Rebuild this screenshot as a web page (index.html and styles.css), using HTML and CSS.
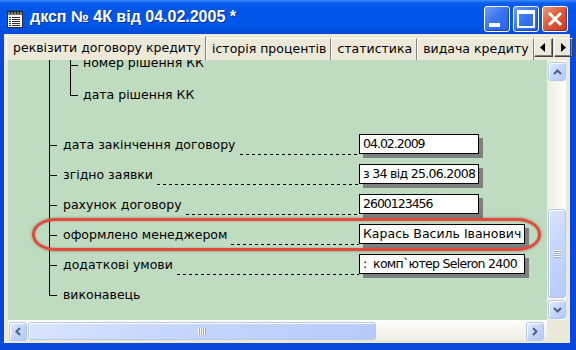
FILE: index.html
```html
<!DOCTYPE html>
<html lang="uk">
<head>
    <meta charset="UTF-8">
    <title>дксп № 4К від 04.02.2005</title>
    <link rel="stylesheet" href="styles.css">
</head>
<body>
    <div class="window">
        <div class="titlebar">
            <svg class="app-icon" width="18" height="19" viewBox="0 0 18 19">
                <rect x="1.5" y="2.5" width="15" height="16" fill="#f4f4f4" stroke="#2a2a2a"/>
                <rect x="2" y="3" width="14" height="3" fill="#7d7d7d"/>
                <rect x="4" y="1" width="1" height="4" fill="#222"/>
                <rect x="7" y="1" width="1" height="4" fill="#222"/>
                <rect x="10" y="1" width="1" height="4" fill="#222"/>
                <rect x="13" y="1" width="1" height="4" fill="#222"/>
                <path d="M3 8.5h2M6 8.5h8M3 10.5h2M6 10.5h8M3 12.5h2M6 12.5h8M3 14.5h2M6 14.5h8M3 16.5h2M6 16.5h8" stroke="#333" stroke-width="1"/>
            </svg>
            <span class="title">дксп № 4К від 04.02.2005 *</span>
            <div class="caption-buttons">
                <div class="cap-btn"><span class="min-glyph"></span></div>
                <div class="cap-btn"><span class="max-glyph"></span></div>
                <div class="cap-btn close">
                    <svg width="18" height="18" viewBox="0 0 18 18">
                        <path d="M3 3L15 15M15 3L3 15" stroke="#fff" stroke-width="3"/>
                    </svg>
                </div>
            </div>
        </div>

        <div class="client">
            <div class="tabs">
                <div class="tab active">реквізити договору кредиту</div>
                <div class="tab">історія процентів</div>
                <div class="tab">статистика</div>
                <div class="tab">видача кредиту</div>
                <div class="tab-arrows">
                    <div class="arrow-btn">
                        <svg width="6" height="9" viewBox="0 0 6 9"><path d="M5 0V9L0 4.5Z" fill="#000"/></svg>
                    </div>
                    <div class="arrow-btn">
                        <svg width="6" height="9" viewBox="0 0 6 9"><path d="M1 0V9L6 4.5Z" fill="#000"/></svg>
                    </div>
                </div>
            </div>

            <div class="page">
                <div class="view">
                    <div class="tree">
                        <div class="sub">
                            <div class="node"><span class="label">номер рішення КК</span></div>
                            <div class="node"><span class="label">дата рішення КК</span></div>
                        </div>
                        <div class="node">
                            <div class="lead"><span class="label">дата закінчення договору</span><span class="dots"></span></div>
                            <div class="value digits">04.02.2009</div>
                        </div>
                        <div class="node">
                            <div class="lead"><span class="label">згідно заявки</span><span class="dots"></span></div>
                            <div class="value mixed">з 34 від 25.06.2008</div>
                        </div>
                        <div class="node">
                            <div class="lead"><span class="label">рахунок договору</span><span class="dots"></span></div>
                            <div class="value digits">2600123456</div>
                        </div>
                        <div class="node">
                            <div class="lead"><span class="label">оформлено менеджером</span><span class="dots"></span></div>
                            <div class="value wide">Карась Василь Іванович</div>
                        </div>
                        <div class="node">
                            <div class="lead"><span class="label">додаткові умови</span><span class="dots"></span></div>
                            <div class="value wide mixed">:  комп`ютер Seleron 2400</div>
                        </div>
                        <div class="node"><span class="label">виконавець</span></div>
                    </div>
                    <div class="highlight"></div>
                </div>

                <div class="vscroll">
                    <div class="sb-btn">
                        <svg width="9" height="6" viewBox="0 0 9 6"><path d="M1 5L4.5 1.5L8 5" fill="none" stroke="#4d6185" stroke-width="2"/></svg>
                    </div>
                    <div class="vtrack">
                        <div class="thumb vthumb"><span class="grip"></span></div>
                    </div>
                    <div class="sb-btn">
                        <svg width="9" height="6" viewBox="0 0 9 6"><path d="M1 1L4.5 4.5L8 1" fill="none" stroke="#4d6185" stroke-width="2"/></svg>
                    </div>
                </div>

                <div class="hscroll">
                    <div class="sb-btn">
                        <svg width="6" height="9" viewBox="0 0 6 9"><path d="M5 1L1.5 4.5L5 8" fill="none" stroke="#4d6185" stroke-width="2"/></svg>
                    </div>
                    <div class="htrack">
                        <div class="thumb hthumb"><span class="grip"></span></div>
                    </div>
                    <div class="sb-btn">
                        <svg width="6" height="9" viewBox="0 0 6 9"><path d="M1 1L4.5 4.5L1 8" fill="none" stroke="#4d6185" stroke-width="2"/></svg>
                    </div>
                </div>

                <div class="corner"></div>
            </div>
        </div>
    </div>
</body>
</html>
```

FILE: styles.css
```css
* {
    margin: 0;
    padding: 0;
    box-sizing: border-box;
}

body {
    width: 576px;
    height: 350px;
    overflow: hidden;
    font-family: "DejaVu Sans", sans-serif;
    font-size: 12.5px;
    color: #000;
}

.window {
    height: 350px;
    display: flex;
    flex-direction: column;
    background: #0a48dc;
}

/* title bar */

.titlebar {
    height: 34px;
    padding: 4px 8px 0 6px;
    display: flex;
    align-items: center;
    gap: 6px;
    background: linear-gradient(to bottom, #3d8cff 0, #0b5df0 3px, #0055e6 10px, #0057ec 24px, #004bd8 34px);
}

.app-icon {
    flex: none;
    margin-top: -1px;
}

.title {
    flex: 1;
    font-family: "Liberation Sans", Arial, sans-serif;
    font-weight: bold;
    font-size: 16px;
    color: #fff;
    text-shadow: 1px 1px 0 #0a2f9a;
    margin-top: -4px;
}

.caption-buttons {
    display: flex;
    gap: 3px;
}

.cap-btn {
    width: 26px;
    height: 26px;
    border: 1px solid #fff;
    border-radius: 3px;
    background: linear-gradient(135deg, #6f9cf7 0%, #3b74ee 45%, #2a63e6 100%);
    box-shadow: inset -1px -1px 1px rgba(0, 30, 140, 0.5);
    position: relative;
    display: grid;
    place-items: center;
}

.cap-btn.close {
    background: linear-gradient(135deg, #eb9a80 0%, #de5a39 45%, #cc3a1b 100%);
}

.min-glyph {
    position: absolute;
    left: 4px;
    bottom: 4px;
    width: 11px;
    height: 4px;
    background: #fff;
}

.max-glyph {
    width: 18px;
    height: 18px;
    border: 2px solid #fff;
    border-top-width: 4px;
}

/* client area */

.client {
    flex: 1;
    margin: 0 6px 7px 4px;
    background: #ece9d8;
    display: flex;
    flex-direction: column;
}

.tabs {
    height: 26px;
    padding: 2px 0 0 2px;
    display: flex;
    align-items: flex-end;
}

.tab {
    height: 22px;
    padding: 0 4px 0 5px;
    line-height: 20px;
    border-top: 1px solid #fff;
    border-left: 1px solid #fff;
    border-right: 1px solid #808080;
    white-space: nowrap;
}

.tab.active {
    height: 24px;
    width: 200px;
    padding: 0 6px;
    line-height: 22px;
}

.tab-arrows {
    margin-left: auto;
    margin-bottom: 3px;
    display: flex;
    gap: 1px;
}

.arrow-btn {
    width: 19px;
    height: 19px;
    display: grid;
    place-items: center;
    border: 1px solid;
    border-color: #fff #404040 #404040 #fff;
    box-shadow: inset -1px -1px 0 #808080;
}

.page {
    flex: 1;
    margin: 0 4px 3px 4px;
    display: grid;
    grid-template-columns: 1fr 19px;
    grid-template-rows: 1fr 20px;
}

/* tree */

.view {
    position: relative;
    overflow: hidden;
    background: #c0dcc0;
}

.tree {
    position: relative;
    margin: -10px 0 0 41px;
}

.tree::before,
.sub::before {
    content: '';
    position: absolute;
    left: 0;
    top: 0;
    bottom: 15px;
    border-left: 1px solid #000;
}

.sub {
    position: relative;
    margin: 0 0 20px 21px;
}

.node {
    position: relative;
    height: 30px;
    padding-left: 14px;
    display: flex;
    align-items: flex-start;
}

.node::before {
    content: '';
    position: absolute;
    left: 0;
    top: 15px;
    width: 8px;
    border-top: 1px solid #000;
}

.sub .node {
    padding-left: 13px;
}

.sub .node:first-child .label {
    margin-top: -2px;
}

.label {
    line-height: 30px;
    white-space: nowrap;
}

.lead {
    width: 296px;
    display: flex;
}

.lead .label {
    padding-right: 4px;
}

.dots {
    flex: 1;
    height: 1px;
    margin-top: 24px;
    background: repeating-linear-gradient(to right, #000 0 3px, transparent 3px 6px);
}

.value {
    width: 120px;
    height: 20px;
    margin-top: 4px;
    padding: 0 3px;
    border: 1px solid #000;
    background: #fff;
    box-shadow: 4px 4px 0 #808080;
    line-height: 18px;
    white-space: pre;
    overflow: hidden;
}

.value.wide {
    width: 166px;
}

.value.digits {
    letter-spacing: -1px;
}

.value.mixed {
    letter-spacing: -0.7px;
}

.highlight {
    position: absolute;
    left: 24px;
    top: 158px;
    width: 509px;
    height: 33px;
    border: 3px solid #e5493b;
    border-radius: 24px / 16px;
    box-shadow: 0 0 3px rgba(70, 70, 60, 0.55), inset 0 0 2px rgba(70, 70, 60, 0.45);
}

/* scrollbars */

.vscroll {
    display: flex;
    flex-direction: column;
    padding: 2px 0 1px 1px;
    background: linear-gradient(to right, #eeede5, #fefefb);
}

.hscroll {
    display: flex;
    padding: 2px 3px 0 1px;
    background: linear-gradient(to bottom, #fefefb, #eeede5);
}

.sb-btn {
    flex: none;
    width: 18px;
    height: 19px;
    display: grid;
    place-items: center;
    border: 1px solid #b4c7f1;
    border-radius: 3px;
    background: linear-gradient(135deg, #e2eafe 0%, #c6d6fc 50%, #b4c9f8 100%);
    box-shadow: inset 1px 1px 0 #fff;
}

.vtrack {
    flex: 1;
    display: flex;
    flex-direction: column;
    justify-content: flex-end;
    padding-bottom: 2px;
}

.htrack {
    flex: 1;
    padding-left: 1px;
}

.thumb {
    display: grid;
    place-items: center;
    border: 1px solid #b4c7f1;
    border-radius: 3px;
    background: linear-gradient(135deg, #d8e3fe 0%, #c4d4fc 50%, #b6caf9 100%);
    box-shadow: inset 1px 1px 0 #fff;
}

.vthumb {
    width: 18px;
    height: 89px;
}

.hthumb {
    width: 348px;
    height: 18px;
}

.vthumb .grip {
    width: 7px;
    height: 8px;
    background: repeating-linear-gradient(to bottom, #fff 0 1px, #8fa8e6 1px 2px);
}

.hthumb .grip {
    width: 8px;
    height: 7px;
    background: repeating-linear-gradient(to right, #fff 0 1px, #8fa8e6 1px 2px);
}

.corner {
    background: #ece9d8;
}
```
